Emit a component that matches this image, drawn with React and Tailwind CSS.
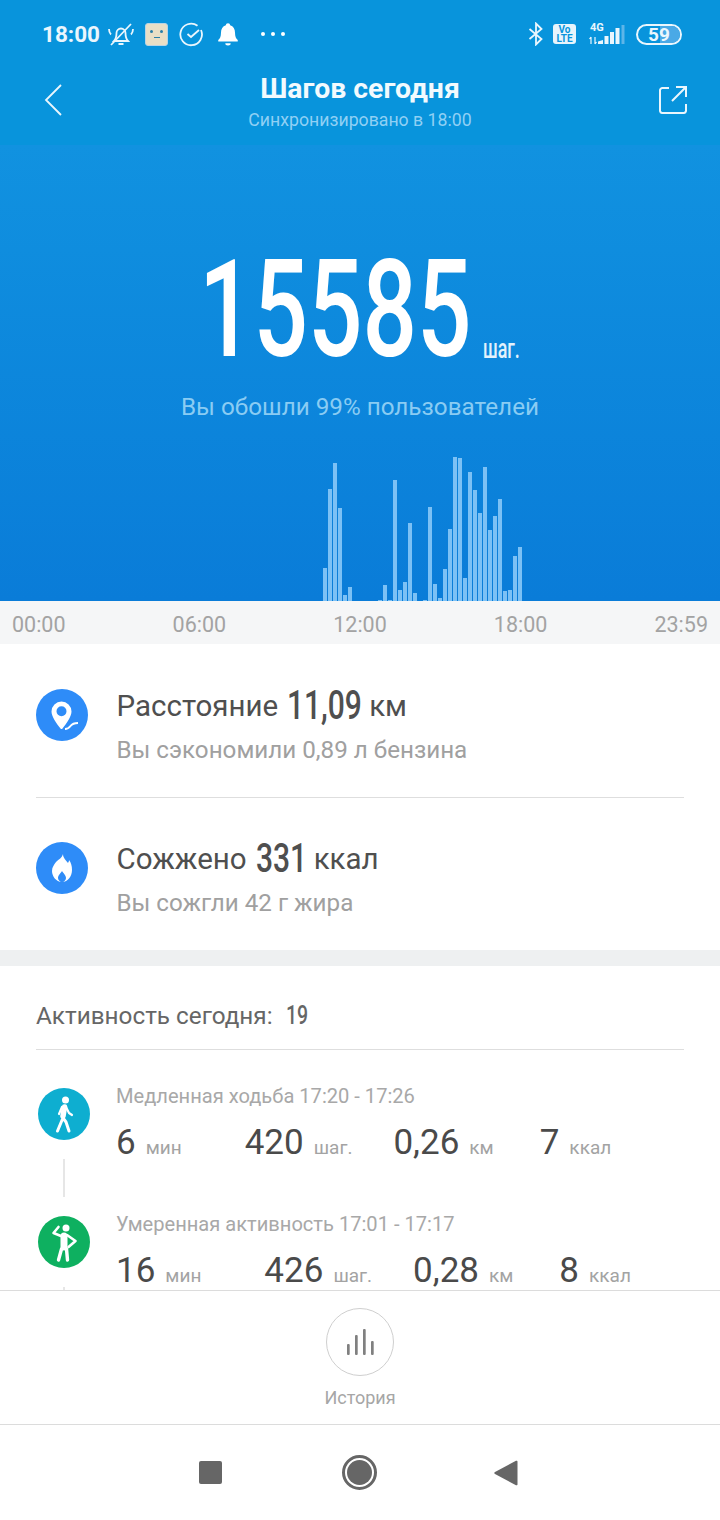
const BARS = [33, 112, 138, 93, 6, 14, 0, 0, 0, 0, 0, 1, 16, 1, 121, 11, 19, 78, 8, 0, 1, 94, 17, 3, 32, 72, 144, 143, 23, 129, 111, 88, 134, 71, 85, 102, 10, 11, 45, 54]

const ACTIVITIES = [
  { label: 'Медленная ходьба 17:20 - 17:26', min: '6', steps: '420', km: '0,26', kcal: '7', color: 'bg-[#0eaed0]', icon: 'walk' },
  { label: 'Умеренная активность 17:01 - 17:17', min: '16', steps: '426', km: '0,28', kcal: '8', color: 'bg-[#0eb060]', icon: 'active' },
]

function StatusBar() {
  return (
    <div className="h-[68px] flex items-center pl-[42px] pr-[38px] text-white">
      <span className="text-[22.500px] mt-[2px] font-bold text-[#eaf6fd] w-[66px]">18:00</span>
      <svg width="26" height="26" viewBox="0 0 26 26" fill="none" stroke="#eaf6fd" strokeWidth="1.800">
        <path d="M6 20h14c-2-2-2.500-5-2.500-8a4.500 4.500 0 0 0-9 0c0 3-.5 6-2.500 8z" />
        <path d="M10.500 23h5M3 24L23 3M1 8c0 2 .5 4 2 5.500M25 8c0 2-.5 4-2 5.500" />
      </svg>
      <div className="ml-[11px] w-[23px] h-[23px] rounded-[3px] bg-[#e9dfc6] border border-[#b9d4e4] flex flex-col items-center justify-center">
        <div className="flex gap-[7px]">
          <div className="w-[3px] h-[3px] rounded-full bg-[#2b7fa8]" />
          <div className="w-[3px] h-[3px] rounded-full bg-[#2b7fa8]" />
        </div>
        <div className="w-[6px] h-px bg-[#2b7fa8] mt-[4px]" />
      </div>
      <svg width="26" height="26" viewBox="0 0 26 26" fill="none" stroke="#eaf6fd" strokeWidth="1.800" className="ml-[11px]">
        <path d="M22 9a10.800 10.800 0 1 1-3.500-4.300" />
        <path d="M8.500 13l3.500 3 8-7" />
      </svg>
      <svg width="26" height="26" viewBox="0 0 24 24" fill="#ffffff" className="ml-[10px]">
        <path d="M12 2a2 2 0 0 1 2 2c3 1 4.500 3.500 4.500 7 0 3 .8 5 2.500 6.500V19H3v-1.500C4.700 16 5.500 14 5.500 11c0-3.500 1.500-6 4.500-7a2 2 0 0 1 2-2z" />
        <path d="M9.500 20.500h5a2.500 2 0 0 1-5 0z" />
      </svg>
      <div className="ml-[20px] flex gap-[6px]">
        <div className="w-[4px] h-[4px] rounded-full bg-white" />
        <div className="w-[4px] h-[4px] rounded-full bg-white" />
        <div className="w-[4px] h-[4px] rounded-full bg-white" />
      </div>
      <svg width="16" height="24" viewBox="0 0 16 24" fill="none" stroke="#eaf6fd" strokeWidth="1.800" className="ml-auto">
        <path d="M1.500 7l12 10-5.500 5.500v-21l5.500 5.500-12 10" />
      </svg>
      <div className="ml-[9px] w-[23px] h-[20px] rounded-[3px] bg-[#e6f4fc] text-[#0894dc] text-[10px] font-bold leading-[9px] flex flex-col items-center justify-center">
        <span>Vo</span>
        <span>LTE</span>
      </div>
      <div className="ml-[12px] relative w-[38px] h-[22px]">
        <span className="absolute left-[2px] -top-[1px] text-[11px] font-bold text-[#eaf6fd] leading-[11px]">4G</span>
        <svg width="38" height="22" viewBox="0 0 38 22" className="absolute left-0 top-0">
          <path d="M3 14v7M1.500 16L3 14M7 14v7M7 21l1.500-2" stroke="#eaf6fd" strokeWidth="1.200" fill="none" />
          <path d="M10 21v-2.500l5-1.500v4zM16.500 21v-8h4v8zM22 21V9h4v12zM27.500 21V5h4v16z" fill="#eaf6fd" />
          <path d="M33.500 21V2h3v19z" fill="#5db5e8" />
        </svg>
      </div>
      <div className="ml-[10px] w-[46px] h-[21px] rounded-full border-2 border-[#eaf6fd] flex items-center justify-center relative overflow-hidden">
        <div className="absolute right-0 top-0 bottom-0 w-[20px] bg-[#4aa9e6]" />
        <span className="relative text-[19px] font-bold text-[#eaf6fd] leading-none">59</span>
      </div>
    </div>
  )
}

function Header() {
  return (
    <div className="h-[77px] flex items-start justify-between pl-[44px] pr-[32px]">
      <svg width="20" height="34" viewBox="0 0 20 34" fill="none" stroke="#eaf6fd" strokeWidth="1.800" className="mt-[15px]">
        <path d="M17 2L2 17l15 15" />
      </svg>
      <div className="-ml-[2px] flex flex-col items-center">
        <span className="text-[28.400px] leading-[34px] mt-[4px] font-bold text-[#f2fafe]">Шагов сегодня</span>
        <span className="text-[17.700px] leading-[24px] mt-[2px] text-[#90d0f4]">Синхронизировано в 18:00</span>
      </div>
      <svg width="30" height="30" viewBox="0 0 30 30" fill="none" stroke="#eaf6fd" strokeWidth="2" className="mt-[17px]">
        <path d="M11 3H4a2.500 2.500 0 0 0-2 2v21a2.500 2.500 0 0 0 2 2h22a2.500 2.500 0 0 0 2-2v-7" />
        <path d="M14 16L27 3M18 2h10v10" />
      </svg>
    </div>
  )
}

function Hero() {
  return (
    <div className="h-[456px] bg-gradient-to-b from-[#1192e0] to-[#0a7cd8] flex flex-col items-center">
      <div className="mt-[95px] h-[140px] flex items-end">
        <span className="block w-[267px] origin-left scale-x-[.705] text-[136px] leading-[140px] font-medium text-white whitespace-nowrap">15585</span>
        <span className="block w-[38px] ml-[17px] mb-[16px] origin-left scale-x-[.64] text-[28px] leading-[30px] font-medium text-[#e3f2fc] whitespace-nowrap">шаг.</span>
      </div>
      <p className="mt-[11px] text-[24.250px] leading-[32px] text-[#8accf3]">Вы обошли 99% пользователей</p>
      <div className="mt-auto w-full h-[144px] flex items-end gap-px pl-[323px]">
        {BARS.map((h, i) => (
          <div key={i} className="w-[4px] bg-[#7cc1f5]" style={{ height: h }} />
        ))}
      </div>
    </div>
  )
}

function Axis() {
  return (
    <div className="h-[43px] pt-[5px] bg-[#f5f6f7] flex items-center justify-between px-[12px] text-[21.500px] text-[#a3a3a3]">
      {['00:00', '06:00', '12:00', '18:00', '23:59'].map((t) => (
        <span key={t}>{t}</span>
      ))}
    </div>
  )
}

function PinIcon() {
  return (
    <svg width="34" height="34" viewBox="0 0 34 34">
      <path fillRule="evenodd" fill="#fff" d="M16.500 3.500a10 10 0 0 1 10 10c0 5-5 12-9 17-.5.7-1.500.7-2 0-4-5-9-12-9-17a10 10 0 0 1 10-10zm0 4.800a5 5 0 1 0 0 10 5 5 0 0 0 0-10z" />
      <path d="M20 31c3 0 4-1 5.500-3s3-3 7.500-3" stroke="#fff" strokeWidth="2" fill="none" />
    </svg>
  )
}

function FlameIcon() {
  return (
    <svg width="20" height="28" viewBox="0 0 20 28">
      <path fillRule="evenodd" fill="#fff" d="M11 0c0 4 3 6 5 9 .5-1 1-1.500 1-3 2 2.500 3 6 3 10 0 6-4 12-10 12S0 22 0 17c0-4 2-6 4-9 3-3 6-4 7-8zm-1 17c-1 2-4 4-4 7 0 2 2 4 4 4s4-2 4-4c0-3-3-5-4-7z" />
    </svg>
  )
}

function StatRow({ icon, label, value, valueClass, unit, note }) {
  return (
    <div className="flex h-[152px]">
      <div className="w-[52px] h-[52px] mt-[45px] rounded-full bg-[#2e8cf8] flex items-center justify-center shrink-0">
        {icon}
      </div>
      <div className="ml-[28.500px]">
        <div className="mt-[38px] h-[48px] flex items-center text-[#4f4f4f]">
          <span className="text-[29.500px]">{label}</span>
          {/* narrow digits, the app's number font isn't available */}
          <span className={`ml-[9px] origin-left scale-x-[.75] text-[40px] font-medium whitespace-nowrap ${valueClass}`}>{value}</span>
          <span className="text-[29.500px] ml-[9px]">{unit}</span>
        </div>
        <p className="mt-[5px] text-[24.200px] leading-[30px] text-[#a0a0a0]">{note}</p>
      </div>
    </div>
  )
}

function ActivityIcon({ type }) {
  if (type === 'walk') {
    return (
      <svg width="30" height="44" viewBox="0 0 30 44" fill="none" stroke="#fff" strokeLinecap="round" strokeLinejoin="round">
        <circle cx="16.500" cy="8" r="3.500" fill="#fff" stroke="none" />
        <path d="M15.500 15l-1.500 9" strokeWidth="5.500" />
        <path d="M13 15l-3 7M17 15l3 6 3 2" strokeWidth="2.200" />
        <path d="M13.500 27L8.500 39M14 26l3 4 3 9" strokeWidth="3" />
      </svg>
    )
  }
  return (
    <svg width="34" height="44" viewBox="0 0 34 44" fill="none" stroke="#fff" strokeLinecap="round" strokeLinejoin="round">
      <circle cx="19" cy="8" r="3.500" fill="#fff" stroke="none" />
      <path d="M17 16v11" strokeWidth="7" />
      <path d="M14 16L6.500 13l5-6M20 15l8.500 6-7 6" strokeWidth="2.600" />
      <path d="M14.500 29L11.500 40M19.500 29l1 11" strokeWidth="3.400" />
    </svg>
  )
}

function ActivityRow({ item }) {
  return (
    <div className="flex h-[128px] pl-[2px]">
      <div className="w-[52px] shrink-0 flex flex-col items-center">
        <div className={`w-[52px] h-[52px] rounded-full flex items-center justify-center ${item.color}`}>
          <ActivityIcon type={item.icon} />
        </div>
        <div className="mt-[19px] w-[2px] h-[38px] bg-[#e6e6e6]" />
      </div>
      <div className="ml-[26px]">
        <p className="-mt-[5px] text-[20.100px] leading-[26px] text-[#a8a8a8]">{item.label}</p>
        <div className="mt-[12px] flex items-baseline whitespace-nowrap text-[#a3a3a3] text-[19px]">
          <span className="text-[35px] leading-[44px] text-[#4a4a4a]">{item.min}</span>
          <span className="ml-[10px]">мин</span>
          <span className="ml-[63px] text-[35px] leading-[44px] text-[#4a4a4a]">{item.steps}</span>
          <span className="ml-[10px]">шаг.</span>
          <span className="ml-[41px] text-[35px] leading-[44px] text-[#4a4a4a]">{item.km}</span>
          <span className="ml-[10px]">км</span>
          <span className="ml-[46px] text-[35px] leading-[44px] text-[#4a4a4a]">{item.kcal}</span>
          <span className="ml-[10px]">ккал</span>
        </div>
      </div>
    </div>
  )
}

function BottomTab() {
  return (
    <div className="h-[135px] shrink-0 border-t border-b border-[#dcdcdc] bg-white flex flex-col items-center">
      <div className="mt-[17px] w-[68px] h-[68px] rounded-full border border-[#cfcfcf] flex items-center justify-center">
        <svg width="27" height="26" viewBox="0 0 27 26" fill="#808080">
          <rect x="0" y="15" width="2.700" height="11" rx="1" />
          <rect x="8" y="6" width="2.700" height="20" rx="1" />
          <rect x="16" y="0" width="2.700" height="26" rx="1" />
          <rect x="24" y="12" width="2.700" height="14" rx="1" />
        </svg>
      </div>
      <span className="mt-[10px] text-[18px] leading-[24px] text-[#a6a6a6]">История</span>
    </div>
  )
}

function NavBar() {
  return (
    <div className="flex-1 bg-white flex items-center">
      <div className="ml-[199px] w-[23px] h-[23px] rounded-[2px] bg-[#666666]" />
      <div className="ml-[120px] w-[35px] h-[35px] rounded-full border-[3px] border-[#666666] flex items-center justify-center">
        <div className="w-[25px] h-[25px] rounded-full bg-[#666666]" />
      </div>
      <svg width="24" height="26" viewBox="0 0 24 26" fill="#666666" className="ml-[117px]">
        <path d="M22 .8c.8-.3 1.500 0 1.500 1v22.400c0 1-.7 1.300-1.500 1L1 14c-1-.6-1-1.400 0-2z" />
      </svg>
    </div>
  )
}

export default function App() {
  return (
    <div className="w-[720px] h-[1520px] flex flex-col overflow-hidden bg-white font-['Roboto',sans-serif]">
      <div className="h-[1290px] shrink-0 overflow-hidden">
        <div className="bg-[#0894dc]">
          <StatusBar />
          <Header />
        </div>
        <Hero />
        <Axis />
        <section className="px-[36px] h-[306px]">
          <div className="border-b border-[#dedede] pb-px">
            <StatRow icon={<PinIcon />} label="Расстояние" value="11,09" valueClass="w-[73px]" unit="км" note="Вы сэкономили 0,89 л бензина" />
          </div>
          <div className="-mt-px">
            <StatRow icon={<FlameIcon />} label="Сожжено" value="331" valueClass="w-[49px]" unit="ккал" note="Вы сожгли 42 г жира" />
          </div>
        </section>
        <div className="h-[16px] bg-[#eef0f1]" />
        <section className="px-[36px]">
          <div className="h-[84px] border-b border-[#dedede] flex items-center pt-[17px] text-[24.300px] text-[#666666]">
            Активность сегодня:
            <span className="ml-[13px] w-[22px] origin-left scale-x-[.78] text-[25px] font-medium">19</span>
          </div>
          <div className="mt-[38px]">
            {ACTIVITIES.map((item) => (
              <ActivityRow key={item.label} item={item} />
            ))}
          </div>
        </section>
      </div>
      <BottomTab />
      <NavBar />
    </div>
  )
}
